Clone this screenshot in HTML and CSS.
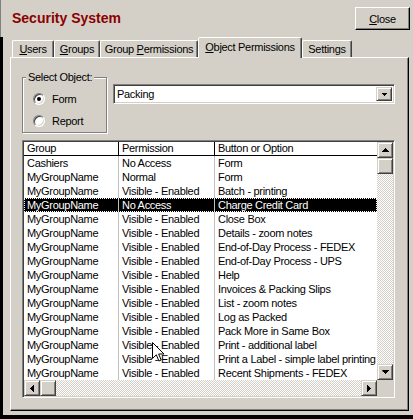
FILE: index.html
```html
<!DOCTYPE html>
<html lang="en">
<head>
    <meta charset="UTF-8">
    <title>Security System</title>
    <link rel="stylesheet" href="styles.css">
</head>
<body>
    <div class="dialog">
        <div class="titlebar">
            <h1>Security System</h1>
            <button class="btn close"><u>C</u>lose</button>
        </div>

        <div class="main">
            <div class="tabs">
                <div class="tab t-users"><u>U</u>sers</div>
                <div class="tab t-groups"><u>G</u>roups</div>
                <div class="tab t-gperm">Group <u>P</u>ermissions</div>
                <div class="tab t-operm active"><u>O</u>bject Permissions</div>
                <div class="tab t-settings">Settings</div>
            </div>

            <div class="panel">
                <div class="top-row">
                    <fieldset class="groupbox">
                        <legend>Select Object:</legend>
                        <label class="radio"><span class="dot checked"></span>Form</label>
                        <label class="radio"><span class="dot"></span>Report</label>
                    </fieldset>
                    <div class="combo">
                        <span class="combo-text">Packing</span>
                        <span class="raised combo-btn">
                            <svg width="5" height="3" viewBox="0 0 5 3"><path d="M0 0h5v1h-1v1h-1v1h-1v-1h-1v-1h-1z"/></svg>
                        </span>
                    </div>
                </div>

                <div class="listbox">
                    <div class="rows" id="rows">
                        <div class="row head">
                            <div class="c1">Group</div>
                            <div class="c2">Permission</div>
                            <div class="c3">Button or Option</div>
                        </div>
                    </div>

                    <div class="vscroll">
                        <span class="raised sb-btn">
                            <svg width="7" height="4" viewBox="0 0 7 4"><path d="M3 0h1v1h1v1h1v1h1v1h-7v-1h1v-1h1v-1h1z"/></svg>
                        </span>
                        <span class="raised thumb"></span>
                        <span class="track"></span>
                        <span class="raised sb-btn">
                            <svg width="7" height="4" viewBox="0 0 7 4"><path d="M0 0h7v1h-1v1h-1v1h-1v1h-1v-1h-1v-1h-1z"/></svg>
                        </span>
                    </div>

                    <div class="hscroll">
                        <span class="raised sb-btn">
                            <svg width="4" height="7" viewBox="0 0 4 7"><path d="M3 0h1v7h-1v-1h-1v-1h-1v-1h-1v-1h1v-1h1v-1h1z"/></svg>
                        </span>
                        <span class="raised thumb"></span>
                        <span class="track"></span>
                        <span class="raised sb-btn">
                            <svg width="4" height="7" viewBox="0 0 4 7"><path d="M0 0h1v1h1v1h1v1h1v1h-1v1h-1v1h-1v1h-1z"/></svg>
                        </span>
                    </div>

                    <div class="corner"></div>
                </div>
            </div>
        </div>

        <svg class="cursor" width="13" height="21" viewBox="0 0 13 21">
            <path d="M0.5 0.5v16l3.8-3.7 2.6 6.2 2.3-1-2.6-6h5.4z" fill="#fff" stroke="#000" stroke-width="1"/>
        </svg>
    </div>

    <script>
        // lignes de la liste des permissions
        var lignes = [
            ['Cashiers', 'No Access', 'Form'],
            ['MyGroupName', 'Normal', 'Form'],
            ['MyGroupName', 'Visible - Enabled', 'Batch - printing'],
            ['MyGroupName', 'No Access', 'Charge Credit Card'],
            ['MyGroupName', 'Visible - Enabled', 'Close Box'],
            ['MyGroupName', 'Visible - Enabled', 'Details - zoom notes'],
            ['MyGroupName', 'Visible - Enabled', 'End-of-Day Process - FEDEX'],
            ['MyGroupName', 'Visible - Enabled', 'End-of-Day Process - UPS'],
            ['MyGroupName', 'Visible - Enabled', 'Help'],
            ['MyGroupName', 'Visible - Enabled', 'Invoices & Packing Slips'],
            ['MyGroupName', 'Visible - Enabled', 'List - zoom notes'],
            ['MyGroupName', 'Visible - Enabled', 'Log as Packed'],
            ['MyGroupName', 'Visible - Enabled', 'Pack More in Same Box'],
            ['MyGroupName', 'Visible - Enabled', 'Print - additional label'],
            ['MyGroupName', 'Visible - Enabled', 'Print a Label - simple label printing'],
            ['MyGroupName', 'Visible - Enabled', 'Recent Shipments - FEDEX']
        ];
        var selection = 3;

        var rowsDiv = document.getElementById('rows');
        lignes.forEach(function(l, i) {
            var row = document.createElement('div');
            row.className = 'row' + (i === selection ? ' selected' : '');
            ['c1', 'c2', 'c3'].forEach(function(c, j) {
                var cell = document.createElement('div');
                cell.className = c;
                cell.textContent = l[j];
                row.appendChild(cell);
            });
            rowsDiv.appendChild(row);
        });
    </script>
</body>
</html>
```

FILE: styles.css
```css
* { box-sizing: border-box; }
html, body { margin: 0; }
body {
    width: 413px;
    height: 419px;
    overflow: hidden;
    background: #d4d0c8;
    font-family: "Liberation Sans", Arial, sans-serif;
    font-size: 11px;
    letter-spacing: -0.3px;
    color: #000;
}
.dialog {
    position: relative;
    height: 419px;
    display: flex;
    flex-direction: column;
}
.titlebar {
    height: 37px;
    display: flex;
    justify-content: space-between;
    align-items: flex-start;
    border-left: 1px solid #808080;
    padding: 0 3px 0 11px;
}
.titlebar h1 {
    margin: 10px 0 0;
    font-size: 14px;
    line-height: 16px;
    font-weight: bold;
    letter-spacing: 0;
    color: #8b0000;
}
.btn {
    font: inherit;
    letter-spacing: inherit;
    color: #000;
    background: #d4d0c8;
    border: 1px solid;
    border-color: #fff #000 #000 #fff;
    box-shadow: inset -1px -1px #808080;
    padding: 0;
}
.close {
    margin-top: 7px;
    width: 55px;
    height: 23px;
}
.main {
    flex: 1;
    display: flex;
    flex-direction: column;
    border-left: 3px solid #000;
    border-bottom: 4px solid #000;
    padding: 0 4px 4px 7px;
}

/* onglets */
.tabs {
    height: 20px;
    display: flex;
    align-items: flex-end;
    padding-left: 2px;
}
.tab {
    height: 17px;
    line-height: 16px;
    text-align: center;
    border: 1px solid;
    border-bottom: 0;
    border-color: #fff #404040 transparent #fff;
    box-shadow: inset -1px 0 #808080;
    border-radius: 2px 2px 0 0;
    white-space: nowrap;
}
.t-users { width: 42px; }
.t-groups { width: 46px; }
.t-gperm { width: 98px; }
.t-operm { width: 104px; }
.t-settings { width: 50px; }
.tab.active {
    height: 21px;
    line-height: 18px;
    margin-bottom: -1px;
    position: relative;
    z-index: 1;
    background: #d4d0c8;
}
.panel {
    flex: 1;
    border: 1px solid;
    border-color: #fff #000 #000 #fff;
    box-shadow: inset -1px -1px #808080;
    padding: 13px 0 0 11px;
}
.top-row {
    display: flex;
    align-items: flex-start;
}

/* groupe Select Object */
.groupbox {
    margin: 0;
    padding: 4px 0 0;
    width: 85px;
    border: 1px solid #808080;
    box-shadow: inset 1px 1px #fff, 1px 1px #fff;
}
.groupbox legend {
    margin-left: 3px;
    padding: 0 2px;
    line-height: 13px;
    background: #d4d0c8;
}
.radio {
    display: flex;
    align-items: center;
    height: 22px;
    padding-left: 10px;
}
.dot {
    position: relative;
    width: 12px;
    height: 12px;
    margin-right: 7px;
    border-radius: 50%;
    border: 1px solid;
    border-color: #808080 #fff #fff #808080;
    background: #fff;
    box-shadow: inset 1px 1px #404040, inset -1px -1px #d4d0c8;
}
.dot.checked::after {
    content: "";
    position: absolute;
    left: 3px;
    top: 3px;
    width: 4px;
    height: 4px;
    border-radius: 50%;
    background: #000;
}

/* liste deroulante */
.combo {
    margin: 13px 0 0 6px;
    width: 282px;
    height: 20px;
    display: flex;
    background: #fff;
    border: 1px solid;
    border-color: #808080 #fff #fff #808080;
    box-shadow: inset 1px 1px #404040, inset -1px -1px #d4d0c8;
    padding: 2px 2px 2px 2px;
}
.combo-text {
    flex: 1;
    line-height: 14px;
    padding-left: 1px;
}
.raised {
    background: #d4d0c8;
    border: 1px solid;
    border-color: #d4d0c8 #404040 #404040 #d4d0c8;
    box-shadow: inset 1px 1px #fff, inset -1px -1px #808080;
    display: flex;
    align-items: center;
    justify-content: center;
}
.combo-btn {
    width: 16px;
    height: 14px;
}

/* liste des permissions */
.listbox {
    margin-top: 7px;
    width: 373px;
    height: 258px;
    background: #fff;
    border: 1px solid;
    border-color: #808080 #fff #fff #808080;
    box-shadow: inset 1px 1px #404040, inset -1px -1px #d4d0c8;
    padding: 1px;
    display: grid;
    grid-template-columns: 353px 16px;
    grid-template-rows: 238px 16px;
}
.rows {
    overflow: hidden;
}
.row {
    display: flex;
    height: 14px;
    line-height: 14px;
    white-space: nowrap;
}
.row > div {
    overflow: hidden;
    padding-left: 3px;
}
.c1 { width: 95px; flex: none; border-right: 1px solid #c0c0c0; }
.c2 { width: 96px; flex: none; border-right: 1px solid #c0c0c0; }
.c3 { flex: 1; min-width: 0; }
.row.head {
    line-height: 13px;
    border-bottom: 1px solid #000;
}
.row.head .c1, .row.head .c2 { border-right-color: #000; }
.row.selected {
    background: #000;
    color: #fff;
    outline: 1px dotted #fff;
    outline-offset: -1px;
}
.vscroll, .hscroll {
    display: flex;
}
.vscroll { flex-direction: column; }
.sb-btn, .thumb {
    width: 16px;
    height: 16px;
    flex: none;
}
.track {
    flex: 1;
    background: repeating-conic-gradient(#d4d0c8 0 25%, #fff 0 50%) 0 0 / 2px 2px;
}
.corner { background: #d4d0c8; }

.cursor {
    position: absolute;
    left: 152px;
    top: 342px;
}
```
